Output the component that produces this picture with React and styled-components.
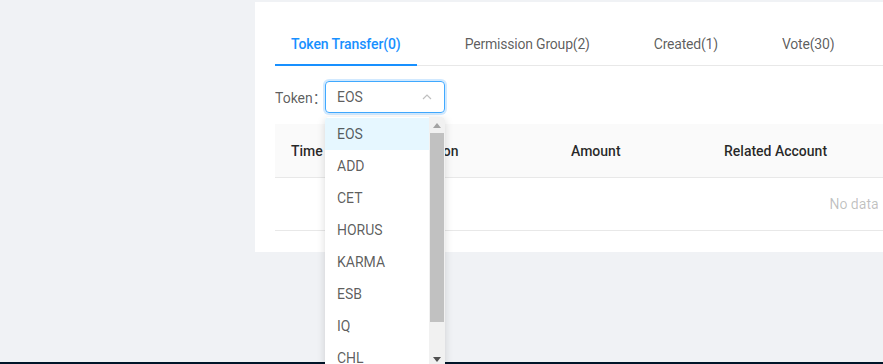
import React from "react";
import styled, { createGlobalStyle } from "styled-components";

const Global = createGlobalStyle`
  html, body { margin: 0; padding: 0; overflow: hidden; }
  body {
    background: #f0f2f5;
    font-family: "Segoe UI", Roboto, "Noto Sans CJK SC", sans-serif;
    font-size: 14px;
    color: rgba(0,0,0,0.65);
  }
  * { box-sizing: border-box; }
`;

const Page = styled.div`
  height: 364px;
  display: flex;
  flex-direction: column;
  overflow: hidden;
`;

const Main = styled.div`
  flex: 1;
  display: flex;
  padding: 2px 0 0 255px;
  min-height: 0;
`;

const Footer = styled.div`
  height: 2px;
  background: #001529;
`;

const Panel = styled.section`
  height: 250px;
  width: 1200px;
  flex-shrink: 0;
  background: #fff;
  padding: 18px 20px 0 20px;
`;

const TabNav = styled.div`
  display: flex;
  border-bottom: 1px solid #e8e8e8;
  margin-bottom: 15px;
`;

const Tab = styled.div`
  position: relative;
  padding: 14px 16px 10px;
  margin-right: 32px;
  line-height: 21px;
  white-space: nowrap;
  letter-spacing: ${(p) => (p.$active ? "-0.1px" : "-0.2px")};
  color: ${(p) => (p.$active ? "#1890ff" : "rgba(0,0,0,0.65)")};
  font-weight: ${(p) => (p.$active ? 500 : 400)};
  &::after {
    content: "";
    display: ${(p) => (p.$active ? "block" : "none")};
    position: absolute;
    left: 0;
    right: 0;
    bottom: -1px;
    height: 2px;
    background: #1890ff;
  }
`;

const FilterRow = styled.div`
  display: flex;
  align-items: center;
  margin-bottom: 11px;
`;

const Label = styled.span`
  color: rgba(0,0,0,0.65);
  width: 50px;
`;

const SelectWrap = styled.div`
  position: relative;
  width: 120px;
`;

const SelectBox = styled.div`
  height: 32px;
  border: 1px solid #40a9ff;
  border-radius: 4px;
  box-shadow: 0 0 0 2px rgba(24,144,255,0.2);
  display: flex;
  align-items: center;
  justify-content: space-between;
  padding: 0 11px;
  color: rgba(0,0,0,0.65);
`;

const Dropdown = styled.div`
  position: absolute;
  top: 36px;
  left: 0;
  width: 120px;
  height: 250px;
  background: #fff;
  border-radius: 4px;
  box-shadow: 0 2px 8px rgba(0,0,0,0.15);
  display: flex;
  overflow: hidden;
  z-index: 10;
`;

const OptionList = styled.ul`
  list-style: none;
  margin: 0;
  padding: 1px 0 0;
  flex: 1;
`;

const Option = styled.li`
  padding: 5px 12px;
  line-height: 22px;
  color: rgba(0,0,0,0.65);
  background: ${(p) => (p.$active ? "#e6f7ff" : "#fff")};
`;

const ScrollTrack = styled.div`
  width: 16px;
  background: #f1f1f1;
  display: flex;
  flex-direction: column;
`;

const ScrollBtn = styled.div`
  height: 16px;
  display: flex;
  align-items: center;
  justify-content: center;
`;

const Thumb = styled.div`
  height: 189px;
  margin: 0 1px;
  background: #c1c1c1;
`;

const TrackSpace = styled.div`
  flex: 1;
`;

const Table = styled.div`
  width: 1160px;
`;

const HeadRow = styled.div`
  display: grid;
  grid-template-columns: 127px 153px 153px 1fr;
  background: #fafafa;
  border-bottom: 1px solid #e8e8e8;
`;

const HeadCell = styled.div`
  padding: 17px 16px 15px;
  line-height: 21px;
  color: rgba(0,0,0,0.85);
  font-weight: 500;
  white-space: nowrap;
`;

const EmptyRow = styled.div`
  height: 53px;
  border-bottom: 1px solid #e8e8e8;
  display: flex;
  align-items: center;
  justify-content: center;
  padding-right: 2px;
  color: rgba(0,0,0,0.25);
`;

const tabs = [
  "Token Transfer(0)",
  "Permission Group(2)",
  "Created(1)",
  "Vote(30)",
];

const tokens = ["EOS", "ADD", "CET", "HORUS", "KARMA", "ESB", "IQ", "CHL"];

const Tri = ({ up, color }) => (
  <svg width="8" height="5" viewBox="0 0 8 5">
    <path d={up ? "M0 5 L4 0 L8 5 Z" : "M0 0 L8 0 L4 5 Z"} fill={color} />
  </svg>
);

export default function App() {
  return (
    <>
      <Global />
      <Page>
        <Main>
          <Panel>
            <TabNav>
              {tabs.map((t, i) => (
                <Tab key={t} $active={i === 0}>
                  {t}
                </Tab>
              ))}
            </TabNav>
            <FilterRow>
              <Label>Token：</Label>
              <SelectWrap>
                <SelectBox>
                  <span>EOS</span>
                  <svg width="12" height="12" viewBox="0 0 12 12">
                    <path
                      d="M2 8 L6 4 L10 8"
                      fill="none"
                      stroke="rgba(0,0,0,0.25)"
                      strokeWidth="1.2"
                    />
                  </svg>
                </SelectBox>
                <Dropdown>
                  <OptionList>
                    {tokens.map((t, i) => (
                      <Option key={t} $active={i === 0}>
                        {t}
                      </Option>
                    ))}
                  </OptionList>
                  <ScrollTrack>
                    <ScrollBtn>
                      <Tri up color="#a3a3a3" />
                    </ScrollBtn>
                    <Thumb />
                    <TrackSpace />
                    <ScrollBtn>
                      <Tri color="#505050" />
                    </ScrollBtn>
                  </ScrollTrack>
                </Dropdown>
              </SelectWrap>
            </FilterRow>
            <Table>
              <HeadRow>
                <HeadCell>Time</HeadCell>
                <HeadCell>Action</HeadCell>
                <HeadCell>Amount</HeadCell>
                <HeadCell>Related Account</HeadCell>
              </HeadRow>
              <EmptyRow>No data</EmptyRow>
            </Table>
          </Panel>
        </Main>
        <Footer />
      </Page>
    </>
  );
}
